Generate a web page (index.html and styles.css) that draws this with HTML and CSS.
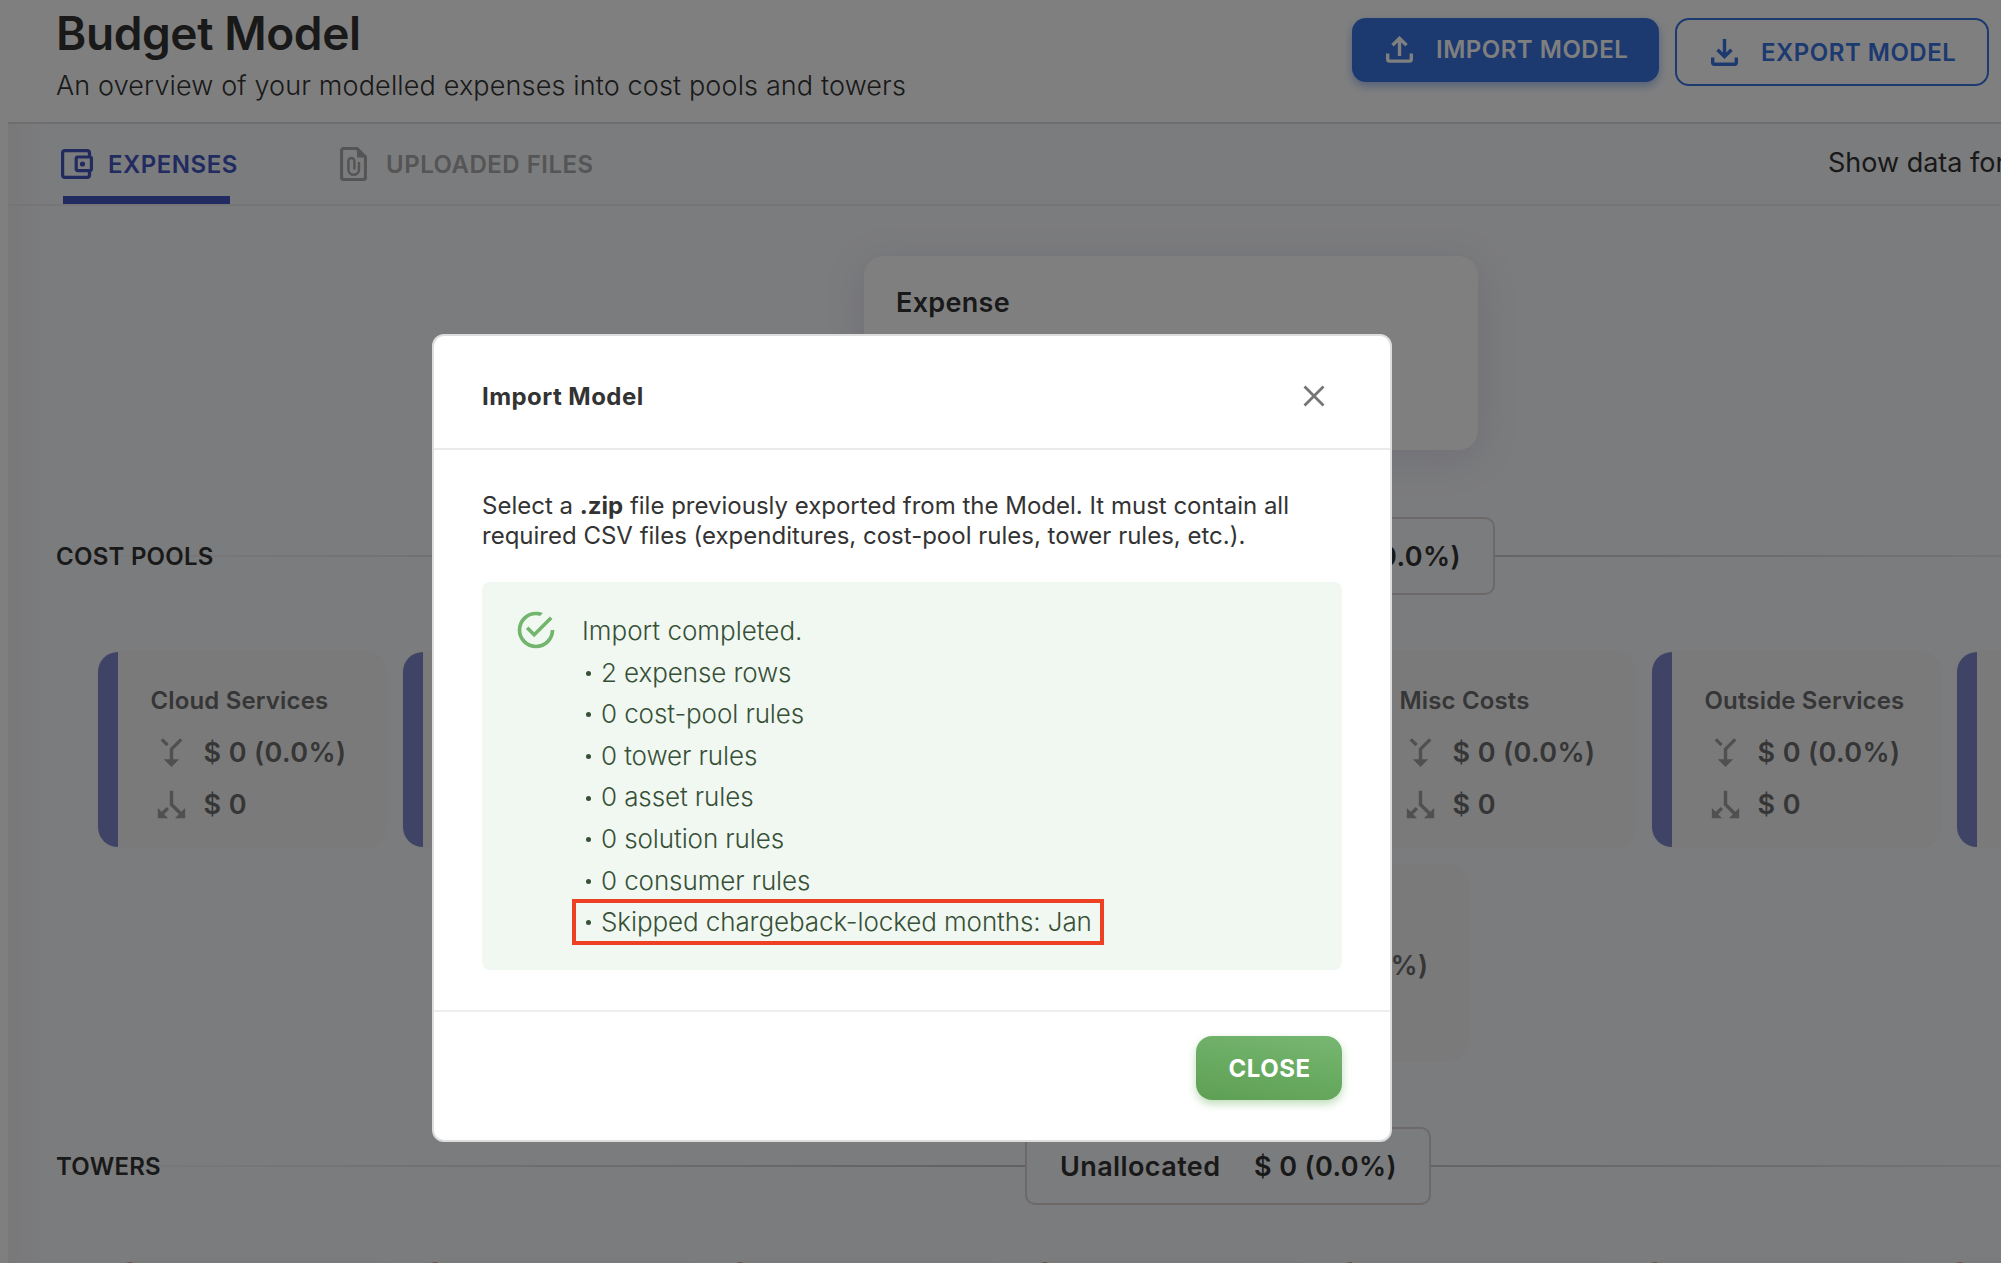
FILE: index.html
```html
<!DOCTYPE html>
<html lang="en">
<head>
    <meta charset="UTF-8">
    <title>Budget Model</title>
    <link rel="stylesheet" href="styles.css">
</head>
<body>
    <!-- Shared icons -->
    <svg class="sprite">
        <symbol id="icon-merge" viewBox="0 0 24 24"><path transform="rotate(180 12 12)" d="M17 20.41L18.41 19 15 15.59 13.59 17 17 20.41zM7.5 8H11v5.59L5.59 19 7 20.41l6-6V8h3.5L12 3.5 7.5 8z"/></symbol>
        <symbol id="icon-split" viewBox="0 0 24 24"><path transform="rotate(180 12 12)" d="M14 4l2.29 2.29-2.88 2.88 1.42 1.42 2.88-2.88L20 10V4zm-4 0H4v6l2.29-2.29 4.71 4.7V20h2v-8.41l-5.29-5.3z"/></symbol>
    </svg>

    <div class="page">
        <header class="header">
            <div>
                <h1>Budget Model</h1>
                <p class="subtitle">An overview of your modelled expenses into cost pools and towers</p>
            </div>
            <div class="actions">
                <button class="btn btn-import">
                    <svg viewBox="0 0 27 27"><path d="M1.7 17.500v5.800q0 1.800 1.800 1.800h20q1.800 0 1.800-1.800v-5.800M13.500 20V2.500M6.500 9.300l7-7 7 7"/></svg>
                    <span>IMPORT MODEL</span>
                </button>
                <button class="btn btn-export">
                    <svg viewBox="0 0 27 27"><path d="M1.7 18.500v5q0 1.700 1.700 1.700h20.200q1.700 0 1.700-1.700v-5M13.500 0v17.500M6.500 10.700l7 7 7-7"/></svg>
                    <span>EXPORT MODEL</span>
                </button>
            </div>
        </header>

        <nav class="tabs">
            <a class="tab active">
                <svg class="icon-wallet" viewBox="0 0 32 30"><path d="M28.500 7V4Q28.500 1.600 26 1.600H4Q1.600 1.600 1.600 4v22q0 2.400 2.400 2.400h22q2.500 0 2.500-2.400V23"/><rect x="15.200" y="8" width="15.200" height="13.600" rx="1.500"/><circle class="solid" cx="21.500" cy="15" r="2.600"/></svg>
                <span>EXPENSES</span>
            </a>
            <a class="tab">
                <svg class="icon-file" viewBox="0 0 27 34"><path d="M17 1.500H4q-2.500 0-2.500 2.500v26q0 2.500 2.500 2.500h19q2.500 0 2.500-2.500V10z"/><path class="solid" d="M17 1v9.500h9z"/><path class="clip" d="M19 15v7.500a5.300 5.300 0 0 1-10.600 0V14a3 3 0 0 1 6 0v8.500"/></svg>
                <span>UPLOADED FILES</span>
            </a>
            <span class="show-data">Show data for</span>
        </nav>

        <main class="main">
            <section class="expense-card">
                <h2>Expense</h2>
            </section>

            <div class="divider">
                <h3>COST POOLS</h3>
                <div class="unallocated first"><span>Unallocated</span><span>$ 0 (0.0%)</span></div>
            </div>

            <div class="cards">
                <article class="card"><h4>Cloud Services</h4><p><svg><use href="#icon-merge"/></svg>$ 0 (0.0%)</p><p><svg><use href="#icon-split"/></svg>$ 0</p></article>
                <article class="card"></article>
                <article class="card wide"></article>
                <article class="card"></article>
                <article class="card"><h4>Misc Costs</h4><p><svg><use href="#icon-merge"/></svg>$ 0 (0.0%)</p><p><svg><use href="#icon-split"/></svg>$ 0</p></article>
                <article class="card"><h4>Outside Services</h4><p><svg><use href="#icon-merge"/></svg>$ 0 (0.0%)</p><p><svg><use href="#icon-split"/></svg>$ 0</p></article>
                <article class="card"></article>
            </div>
            <div class="cards">
                <article class="card"></article>
                <article class="card"><h4>&nbsp;</h4><p><svg><use href="#icon-merge"/></svg>$ 0 (0.0%)</p></article>
            </div>

            <div class="divider towers">
                <h3>TOWERS</h3>
                <div class="unallocated"><span>Unallocated</span><span>$ 0 (0.0%)</span></div>
            </div>

            <div class="cards tower-cards">
                <article class="card"></article>
                <article class="card"></article>
                <article class="card"></article>
                <article class="card"></article>
                <article class="card"></article>
                <article class="card"></article>
                <article class="card"></article>
            </div>
        </main>
    </div>

    <div class="backdrop">
        <div class="modal">
            <div class="modal-header">
                <h2>Import Model</h2>
                <svg class="icon-close" viewBox="0 0 22 22"><path d="M1.500 1.500l19 19M20.500 1.500l-19 19"/></svg>
            </div>
            <div class="modal-body">
                <p>Select a <b>.zip</b> file previously exported from the Model. It must contain all<br>required CSV files (expenditures, cost-pool rules, tower rules, etc.).</p>
                <div class="alert">
                    <svg viewBox="0 0 24 24"><path d="M20,12A8,8 0 0,1 12,20A8,8 0 0,1 4,12A8,8 0 0,1 12,4C12.76,4 13.5,4.11 14.2,4.31L15.77,2.74C14.61,2.26 13.34,2 12,2A10,10 0 0,0 2,12A10,10 0 0,0 12,22A10,10 0 0,0 22,12M7.91,10.08L6.5,11.5L11,16L21,6L19.59,4.58L11,13.17L7.91,10.08Z"/></svg>
                    <div>
                        <div>Import completed.</div>
                        <ul>
                            <li>2 expense rows</li>
                            <li>0 cost-pool rules</li>
                            <li>0 tower rules</li>
                            <li>0 asset rules</li>
                            <li>0 solution rules</li>
                            <li>0 consumer rules</li>
                            <li class="skipped">Skipped chargeback-locked months: Jan</li>
                        </ul>
                    </div>
                </div>
            </div>
            <div class="modal-footer">
                <button class="btn-close">CLOSE</button>
            </div>
        </div>
    </div>
</body>
</html>
```
FILE: styles.css
```css
* {
    box-sizing: border-box;
}
body {
    margin: 0;
    height: 1263px;
    overflow: hidden;
    font-family: Inter, "Liberation Sans", sans-serif;
    color: #333;
    background: #fff;
}
h1, h2, h3, h4, p, ul {
    margin: 0;
    padding: 0;
}
button {
    font-family: inherit;
    border: none;
}
.sprite {
    display: none;
}
.page {
    height: 1263px;
    margin-left: 8px;
    overflow: hidden;
    background: linear-gradient(90deg, #f1f1f4, #f7f8fb 36px);
}

/* Header */
.header {
    display: flex;
    justify-content: space-between;
    height: 124px;
    padding: 0 12px 0 48px;
    background: #fff;
    border-bottom: 2px solid #ddd;
}
h1 {
    margin-top: 5px;
    font-size: 46px;
    line-height: 56px;
    font-weight: 600;
    letter-spacing: -0.4px;
}
.subtitle {
    margin-top: 8px;
    font-size: 27px;
    line-height: 34px;
    font-weight: 300;
    letter-spacing: 0.14px;
    white-space: nowrap;
}
.actions {
    display: flex;
    align-items: flex-start;
    gap: 16px;
    padding-top: 18px;
}
.btn {
    display: flex;
    align-items: center;
    gap: 23px;
    height: 64px;
    padding: 0 0 0 34px;
    border-radius: 14px;
    font-size: 24px;
    font-weight: 600;
    letter-spacing: 0.5px;
    white-space: nowrap;
}
.btn svg {
    width: 27px;
    height: 27px;
    fill: none;
    stroke: currentColor;
    stroke-width: 3.4;
}
.btn-import {
    width: 307px;
    padding-bottom: 1px;
    color: #fff;
    background: #3872e0;
    box-shadow: 0 4px 10px rgba(56, 114, 224, 0.45);
}
.btn-export {
    width: 314px;
    height: 68px;
    color: #3872e0;
    background: none;
    border: 2px solid #3872e0;
}

/* Tabs */
.tabs {
    display: flex;
    height: 82px;
    padding-left: 53px;
    border-bottom: 2px solid #eaebee;
}
.tab {
    display: flex;
    align-items: center;
    position: relative;
    height: 80px;
    color: #aaa;
    font-size: 24px;
    font-weight: 600;
    letter-spacing: 0.5px;
}
.tab svg {
    fill: none;
    stroke: currentColor;
    stroke-width: 3.2;
}
.tab.active {
    width: 279px;
    color: #4456c0;
}
.tab.active::after {
    content: "";
    position: absolute;
    left: 2px;
    bottom: 0;
    width: 167px;
    height: 8px;
    background: #4456c0;
}
.icon-wallet {
    width: 32px;
    height: 30px;
    margin-right: 15px;
}
.icon-file {
    width: 27px;
    height: 34px;
    margin-right: 19px;
}
.tab .clip {
    stroke-width: 2.5;
}
.tab .solid {
    fill: currentColor;
    stroke: none;
}
.show-data {
    margin-left: auto;
    width: 173px;
    font-size: 27px;
    line-height: 77px;
    white-space: nowrap;
}

/* Content runs past the right edge */
.main {
    width: 2326px;
}
.expense-card {
    width: 614px;
    height: 194px;
    margin: 50px auto 0;
    padding: 29px 32px;
    background: #fff;
    border-radius: 20px;
    box-shadow: 0 8px 40px rgba(80, 80, 160, 0.15);
}
.expense-card h2 {
    font-size: 27px;
    line-height: 36px;
    font-weight: 600;
    letter-spacing: 0.3px;
}
.divider {
    display: flex;
    align-items: center;
    height: 78px;
    margin-top: 67px;
    padding-left: 48px;
    background: linear-gradient(90deg, transparent 1%, #bbb 50%, transparent) center / 100% 2px no-repeat;
}
.divider h3 {
    width: 969px;
    font-size: 24px;
    font-weight: 600;
    letter-spacing: 0.25px;
}
.unallocated {
    display: flex;
    align-items: center;
    justify-content: space-between;
    width: 406px;
    height: 78px;
    padding: 0 32px 0 33px;
    font-size: 27px;
    font-weight: 600;
    letter-spacing: 0.4px;
    background: #f7f8fb;
    border: 2px solid #d8d2d0;
    border-radius: 10px;
}
.unallocated.first {
    margin-left: 64px;
}
.cards {
    display: flex;
    justify-content: center;
    gap: 17px;
    margin-top: 57px;
}
.cards + .cards {
    margin-top: 18px;
}
.card {
    flex: none;
    width: 288px;
    height: 195px;
    padding: 32px 0 0 53px;
    color: #6c6c6c;
    background: linear-gradient(90deg, #7e88ce 20px, #f4f5f7 20px);
    border-radius: 20px;
    box-shadow: 0 0 2px #eeebed;
}
.card.wide {
    width: 317px;
}
.card h4 {
    font-size: 24px;
    line-height: 34px;
    font-weight: 600;
    letter-spacing: 0.15px;
}
.card p {
    display: flex;
    align-items: center;
    gap: 12px;
    height: 52px;
    font-size: 27px;
    font-weight: 600;
    letter-spacing: 0.4px;
}
.card h4 + p {
    margin-top: 8px;
}
.card p svg {
    width: 41px;
    height: 41px;
    fill: #a0a0a0;
}
.tower-cards .card {
    background: linear-gradient(90deg, #dc9c78 20px, #f4f5f7 20px);
}

/* Modal */
.backdrop {
    position: fixed;
    inset: 0;
    background: rgba(0, 0, 0, 0.5);
}
.modal {
    width: 960px;
    height: 808px;
    margin: 334px 0 0 432px;
    background: #fff;
    border: 2px solid #ddd;
    border-radius: 12px;
}
.modal-header {
    display: flex;
    align-items: center;
    justify-content: space-between;
    height: 114px;
    padding: 8px 65px 0 48px;
    border-bottom: 2px solid #eaeaea;
}
.modal-header h2 {
    font-size: 24px;
    font-weight: 700;
    letter-spacing: 0.45px;
}
.icon-close {
    width: 22px;
    height: 22px;
    fill: none;
    stroke: #757575;
    stroke-width: 2.8;
}
.modal-body {
    height: 560px;
    padding: 41px 48px 0;
    font-size: 24px;
    line-height: 30px;
    white-space: nowrap;
}
.alert {
    display: flex;
    height: 388px;
    margin-top: 31px;
    padding: 28px 32px;
    color: #375037;
    font-size: 26px;
    line-height: 41.6px;
    font-weight: 300;
    background: #f1f8f2;
    border-radius: 8px;
}
.alert svg {
    width: 44px;
    height: 44px;
    margin: -2px 24px 0 0;
    fill: #72b56c;
}
.alert ul {
    list-style: none;
    letter-spacing: -0.1px;
}
.alert li {
    display: flex;
    align-items: center;
}
.alert li::before {
    content: "";
    width: 5px;
    height: 5px;
    margin: 2px 10px 0 4px;
    border-radius: 50%;
    background: #375037;
}
/* Outline of the highlighted row, drawn around it without moving the text */
.skipped {
    width: 528px;
    margin-left: -8px;
    padding-left: 8px;
    outline: 4px solid #ee4023;
    outline-offset: -2px;
}
.modal-footer {
    display: flex;
    justify-content: flex-end;
    padding: 24px 48px;
    border-top: 2px solid #eee;
}
.btn-close {
    width: 146px;
    height: 64px;
    padding: 1px 5px 0 6px;
    color: #fff;
    font-size: 24px;
    font-weight: 700;
    letter-spacing: 0.5px;
    background: linear-gradient(10deg, #5d9f53, #77b772);
    border-radius: 16px;
    box-shadow: 0 4px 8px rgba(93, 170, 83, 0.4);
}
```
